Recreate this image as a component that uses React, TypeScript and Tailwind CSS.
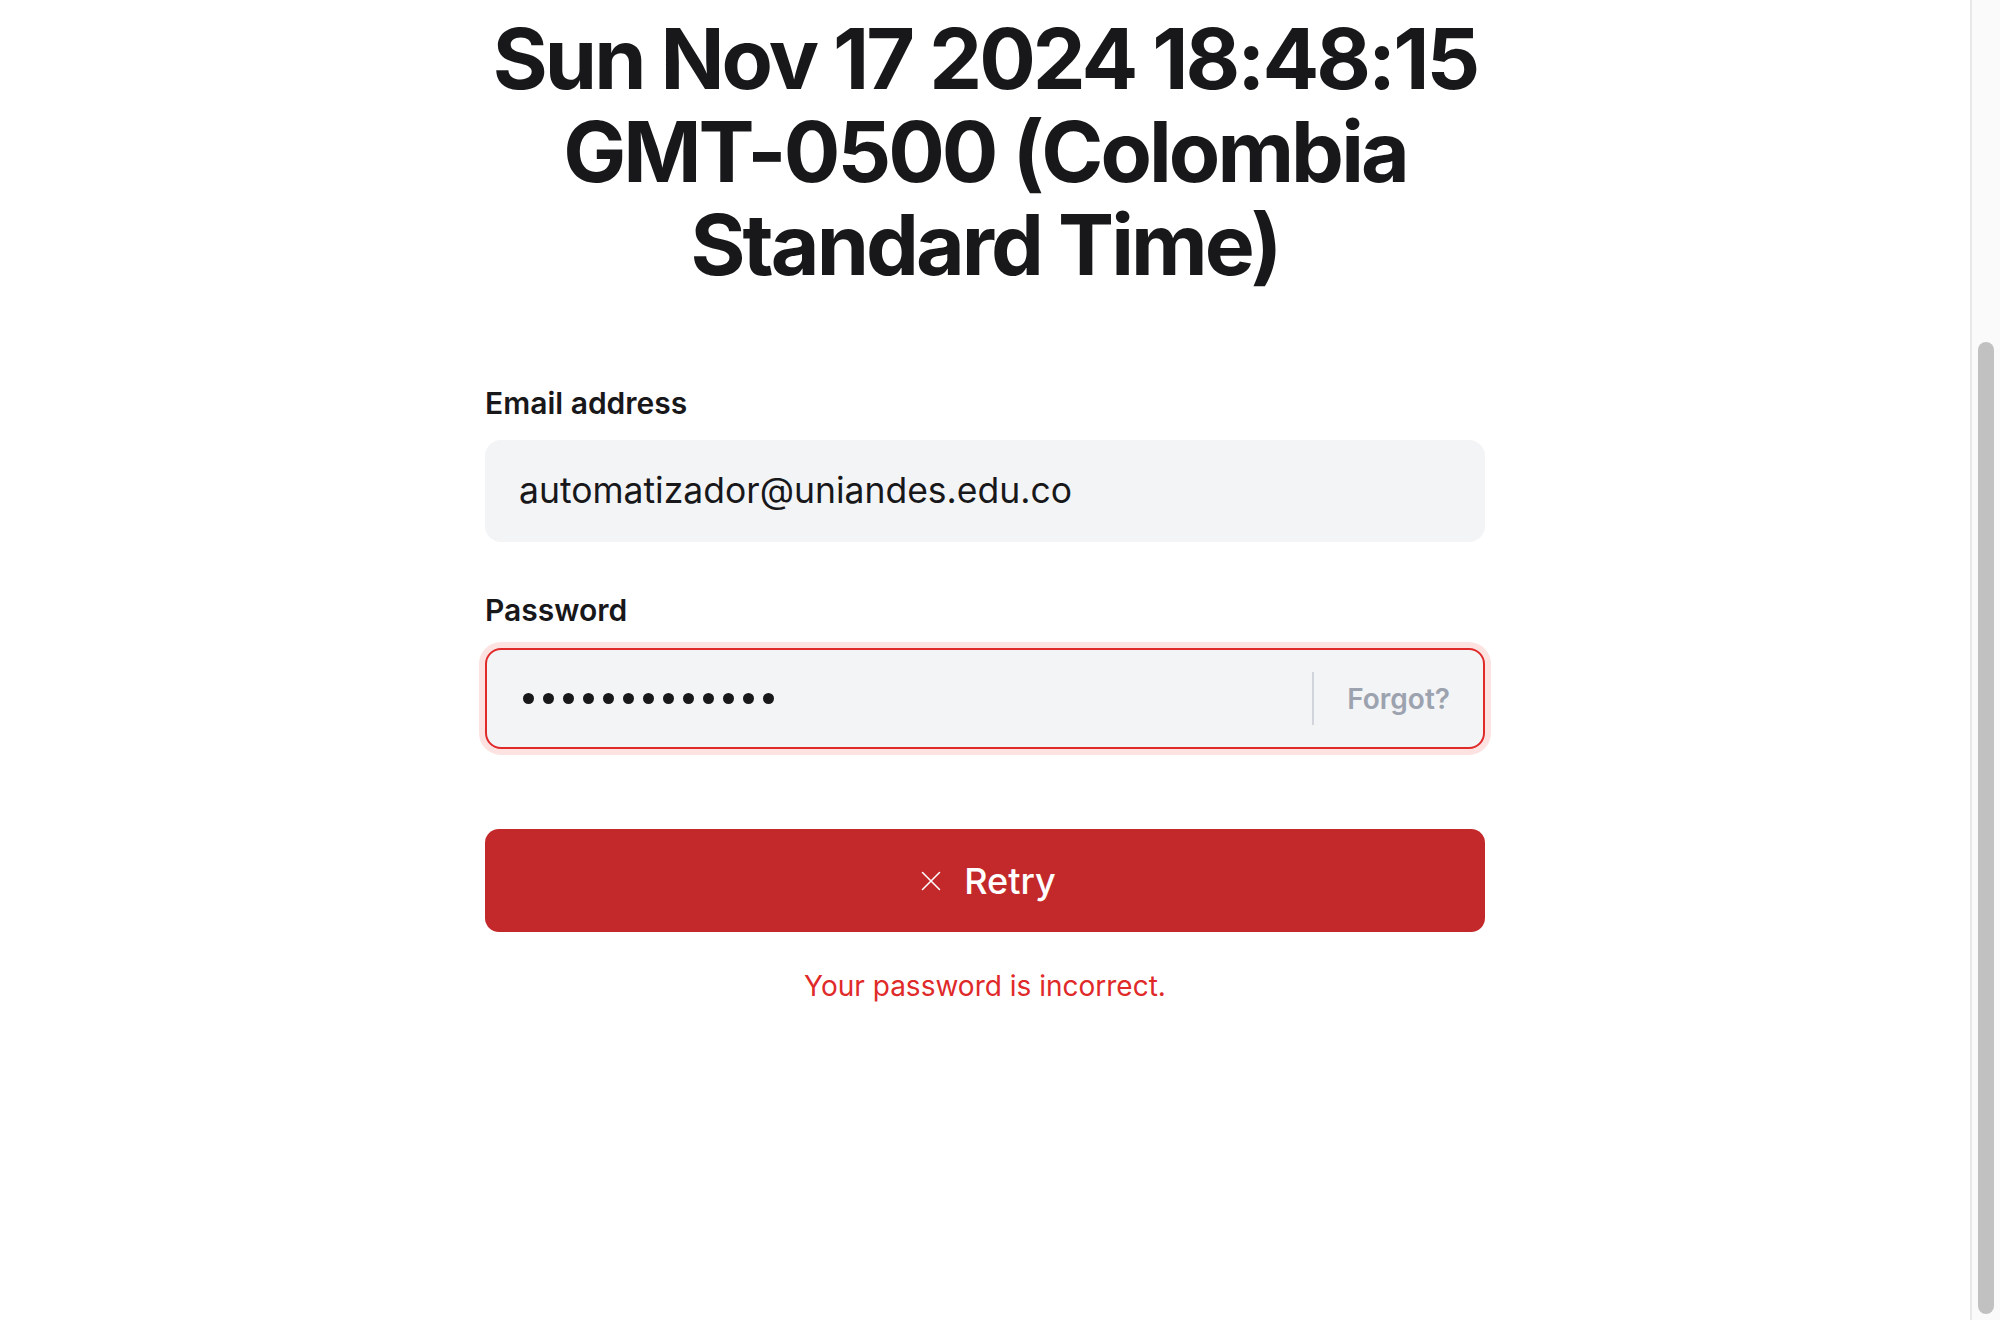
import { X } from "lucide-react";

const font = { fontFamily: "Inter, 'Noto Sans', sans-serif" };

function Scrollbar() {
  return (
    <div className="w-[30px] shrink-0 border-l-2 border-[#e8e8e8] bg-[#fafafa] flex justify-center">
      <div className="w-4 mt-[342px] h-[972px] rounded-full bg-[#c1c1c1]" />
    </div>
  );
}

export default function App() {
  return (
    <div className="h-[1320px] w-full flex bg-white overflow-hidden" style={font}>
      <div className="flex-1 flex justify-center">
        <div className="w-[1000px] flex flex-col pt-[12px]">
          <h1 className="-mx-[40px] text-center text-[84px] leading-[93px] font-bold tracking-[-0.035em] text-[#18181b]">
            Sun Nov 17 2024 18:48:15 GMT-0500 (Colombia Standard Time)
          </h1>

          {/* Email */}
          <label className="mt-[92px] text-[30px] leading-[40px] font-semibold text-[#18181b]">
            Email address
          </label>
          <div className="mt-[17px] h-[102px] rounded-2xl bg-[#f3f4f6] flex items-center px-[34px]">
            <span className="text-[35.5px] text-[#18181b]">automatizador@uniandes.edu.co</span>
          </div>

          {/* Password */}
          <label className="mt-[48px] text-[30px] leading-[40px] font-semibold text-[#18181b]">
            Password
          </label>
          <div className="mt-[18px] h-[101px] rounded-2xl bg-[#f3f4f6] border-2 border-[#e02a2a] shadow-[0_0_0_6px_#fde2e2] flex items-center">
            <div className="flex-1 pl-[36px] flex items-center gap-[9px]">
              {Array.from({ length: 13 }).map((_, i) => (
                <span key={i} className="w-[11px] h-[11px] rounded-full bg-[#18181b]" />
              ))}
            </div>
            <div className="w-[2px] h-[53px] bg-[#d1d5db]" />
            <button className="pl-[33px] pr-[33px] text-[28px] font-semibold text-[#9ca3af]">
              Forgot?
            </button>
          </div>

          {/* Submit */}
          <button className="mt-[80px] h-[103px] rounded-[14px] bg-[#c3292b] flex items-center justify-center gap-[16px] text-white">
            <X size={34} strokeWidth={1.1} />
            <span className="text-[36px] font-medium">Retry</span>
          </button>

          <p className="mt-[34px] text-center text-[28px] leading-[40px] text-[#e02a2a]">
            Your password is incorrect.
          </p>
        </div>
      </div>
      <Scrollbar />
    </div>
  );
}
